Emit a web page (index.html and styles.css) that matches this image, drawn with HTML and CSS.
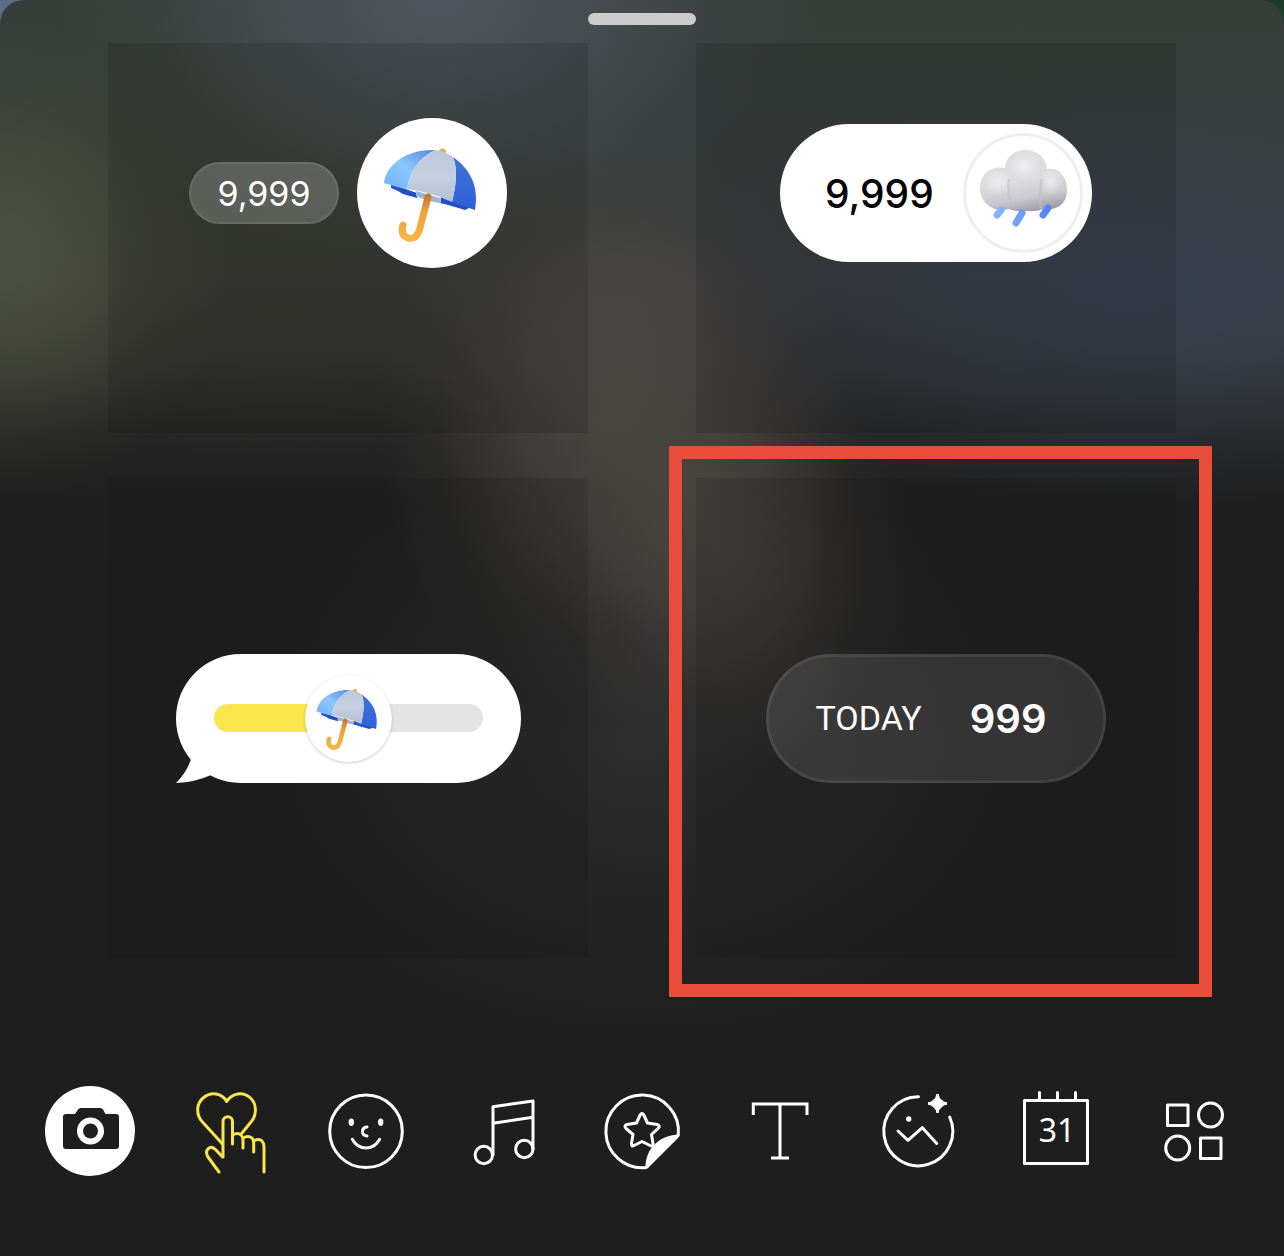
FILE: index.html
```html
<!DOCTYPE html>
<html lang="en">
<head>
<meta charset="utf-8">
<meta name="viewport" content="width=device-width, initial-scale=1">
<title>Stickers</title>
<link rel="stylesheet" href="styles.css">
</head>
<body>
<svg class="defs" aria-hidden="true">
  <defs>
    <linearGradient id="sky" x1="0" y1="1" x2="1" y2="0"><stop offset="0" stop-color="#6fb4fa"/><stop offset=".5" stop-color="#8cc6fd"/><stop offset="1" stop-color="#4f86de"/></linearGradient>
    <linearGradient id="silver" x1="0" y1="0" x2="0" y2="1"><stop offset="0" stop-color="#bcc8dc"/><stop offset=".5" stop-color="#c5cfdf"/><stop offset="1" stop-color="#b3c1d6"/></linearGradient>
    <linearGradient id="royal" x1="0" y1="0" x2="0" y2="1"><stop offset="0" stop-color="#4273d2"/><stop offset="1" stop-color="#2f5fdb"/></linearGradient>
    <linearGradient id="wood" x1="0" y1="0" x2="0" y2="1"><stop offset="0" stop-color="#c9772c"/><stop offset=".35" stop-color="#eca33a"/><stop offset="1" stop-color="#f6b545"/></linearGradient>
    <linearGradient id="puff" gradientUnits="userSpaceOnUse" x1="55" y1="17" x2="66" y2="78"><stop offset="0" stop-color="#dfdfe2"/><stop offset=".5" stop-color="#dcdcdf"/><stop offset=".78" stop-color="#cac9cf"/><stop offset="1" stop-color="#a29dab"/></linearGradient>
    <radialGradient id="glow"><stop offset="0" stop-color="#f2f2f3" stop-opacity=".8"/><stop offset="1" stop-color="#ececee" stop-opacity="0"/></radialGradient>
    <linearGradient id="rain" x1="0" y1="0" x2="1" y2="0"><stop offset="0" stop-color="#85b4ff"/><stop offset="1" stop-color="#5483f4"/></linearGradient>
    <symbol id="umbrella" viewBox="0 0 150 150">
      <path d="M82 34a3 3 0 0 1 7 0l-1 5h-6z" fill="#efaa3c"/>
      <path d="M34 66l26 9v5l-14-4-5-3-7-3z" fill="#234fc4"/>
      <path d="M59 73l27 8v5l-17-4-10-4z" fill="#9fb3d3"/>
      <path d="M84 79l30 10-6 3-10-3-14-4z" fill="#234fc4"/>
      <path d="M27 65C29 47 49 31 78 32C62 40 53 53 50 71Q38 69 27 65Z" fill="url(#sky)"/>
      <path d="M96 39C110 49 123 65 118 92L106 88L95 84C99 68 101 51 96 39Z" fill="url(#royal)"/>
      <path d="M78 32Q88 33 96 39C101 51 99 68 95 84Q73 74 50 71C53 53 62 40 78 32Z" fill="url(#silver)"/>
      <path d="M71 79L63 110Q60 122 51 120Q43 117 46 107" fill="none" stroke="url(#wood)" stroke-width="7" stroke-linecap="round" stroke-linejoin="round"/>
    </symbol>
  </defs>
</svg>

<div class="sheet">
  <button class="handle" aria-label="Resize panel"></button>

  <main class="grid">
    <div class="tile tile-cut">
      <button class="counter" aria-label="Weather counter 9,999">
        <span class="chip">9,999</span>
        <span class="disc"><svg class="art" aria-hidden="true"><use href="#umbrella"/></svg></span>
      </button>
    </div>

    <div class="tile tile-cut">
      <button class="rain-pill" aria-label="Rain counter 9,999">
        <span class="rain-value">9,999</span>
        <span class="ring">
          <svg viewBox="0 0 120 120" aria-hidden="true">
            <path d="M42 35C43 11 82 11 84 36C98 34 104 46 104 57C104 71 94 78 81 76Q72 79 62 78Q53 79 46 76C30 80 17 70 17 55C17 40 29 32 42 35Z" fill="url(#puff)"/>
            <ellipse cx="35" cy="49" rx="16" ry="15" fill="url(#glow)"/>
            <ellipse cx="61" cy="33" rx="18" ry="15" fill="url(#glow)"/>
            <ellipse cx="88" cy="49" rx="12" ry="13" fill="url(#glow)"/>
            <path d="M46 46Q44 66 52 76M79 46Q76 62 78 76" fill="none" stroke="#bfbdc6" stroke-width="3" opacity=".45"/>
            <g stroke="url(#rain)" stroke-width="7" stroke-linecap="round"><path d="M34 82l4-5M53 90l6-10M80 82l5-7"/></g>
          </svg>
        </span>
      </button>
    </div>

    <div class="tile">
      <div class="bubble">
        <svg class="tail" viewBox="0 0 36 28" aria-hidden="true"><path d="M15 0V4Q11 17 0 28Q20 27 35 20L36 0Z"/></svg>
        <label class="slider">
          <input type="range" min="0" max="100" value="50" aria-label="Reaction slider">
          <span class="thumb"><svg class="art-small" aria-hidden="true"><use href="#umbrella"/></svg></span>
        </label>
      </div>
    </div>

    <div class="tile tile-marked">
      <button class="today">
        <span class="today-label">TODAY</span>
        <span class="today-value">999</span>
      </button>
    </div>
  </main>

  <nav class="tools" aria-label="Tools">
    <button class="tool" aria-label="Camera">
      <svg viewBox="0 0 100 100">
        <circle class="solid" cx="50" cy="50" r="45"/>
        <path class="dark" d="M26 33H35L38 28.500Q39 27 41 27H60Q62 27 63 28.500L65.500 33H76Q79 33 79 36V65Q79 68 76 68H26Q23 68 23 65V36Q23 33 26 33Z"/>
        <circle class="solid" cx="50.500" cy="50" r="13.500"/><circle class="dark" cx="50.500" cy="50" r="7.500"/>
      </svg>
    </button>
    <button class="tool tool-active" aria-label="Reactions">
      <svg viewBox="0 0 100 100">
        <path d="M44.500 63L24.500 41C18 34 18 23 25 17C33 10 44 12 48.700 20.500C54 12 65 10 72.500 17C79 23 79 34 73 41L64 52"/>
        <path d="M45 76V40.500a4.750 4.750 0 0 1 9.500 0V63M54.500 54Q60 51 63 54Q65 56 65 59V67M65 57Q70 54 74 57Q75.700 59 75.700 62V71M75.700 60Q81 57 84 60Q86 62 86 66V91M44.500 76L38 69C32 63 26 69 30 76L41 91"/>
      </svg>
    </button>
    <button class="tool" aria-label="Emoji">
      <svg viewBox="0 0 100 100">
        <circle cx="50" cy="50.300" r="36.300"/>
        <ellipse class="solid" cx="35.300" cy="41.300" rx="2.700" ry="3.700"/><ellipse class="solid" cx="64.700" cy="41.300" rx="2.700" ry="3.700"/>
        <path d="M51 46Q46.500 46.500 46.500 50.500Q46.500 54.500 51 55M36.300 58.300Q41 67 50 67Q59 67 63.700 58.300"/>
      </svg>
    </button>
    <button class="tool" aria-label="Music">
      <svg viewBox="0 0 100 100">
        <circle cx="29.800" cy="74" r="8.700"/><circle cx="70.300" cy="68" r="8.700"/>
        <path d="M39 74V25.700L79 20V68M39 42.300L79 36.300"/>
      </svg>
    </button>
    <button class="tool" aria-label="Stickers">
      <svg viewBox="0 0 100 100">
        <path d="M86.300 54A36.300 36.300 0 1 0 54 86.500"/>
        <path d="M48.200 34Q50 31 51.800 34L55.500 42L65 43.500Q69 44.500 66 47.500L59.500 53.500L61 62.500Q61 66 58 64.500L50 60.500L42 64.500Q39 66 39.500 62.500L41 53.500L34 47.500Q31.500 44.500 35 43.500L44.500 42Z"/>
        <path class="solid" d="M87 53.500C69 54 53 66 53.500 88Q56 88 58 85L86 57Q88 55 87 53.500Z"/>
      </svg>
    </button>
    <button class="tool" aria-label="Text">
      <svg viewBox="0 0 100 100"><path class="butt" d="M23.300 34V23H77V34M50 23V77M41 77H59"/></svg>
    </button>
    <button class="tool" aria-label="Photo">
      <svg viewBox="0 0 100 100">
        <path d="M50.500 15.800A34.500 34.500 0 1 0 81.700 36"/>
        <circle class="solid" cx="40.700" cy="38" r="2.700"/>
        <path d="M30 50L40 59.300L54.300 46.700L68.700 62.500"/>
        <path class="solid" d="M68.300 13h2.400Q71 17 74 19Q76 21.300 79 21.300v2.400Q76 23.700 74 26Q71 28 70.700 32h-2.400Q68 28 65 26Q63 23.700 60 23.700v-2.400Q63 21.300 65 19Q68 17 68.300 13Z"/>
      </svg>
    </button>
    <button class="tool" aria-label="Date">
      <svg viewBox="0 0 100 100">
        <path d="M18.500 19.500H81.500V82.500H18.500ZM33.500 11.500V19M51.500 11.500V19M69.500 11.500V19"/>
        <text x="51" y="61" text-anchor="middle">31</text>
      </svg>
    </button>
    <button class="tool" aria-label="Widgets">
      <svg viewBox="0 0 100 100">
        <path d="M23.500 24H44V44.500H23.500ZM56.500 57H77V77.500H56.500Z"/><circle cx="66.500" cy="34" r="12"/><circle cx="33.700" cy="67" r="12"/>
      </svg>
    </button>
  </nav>
</div>
</body>
</html>
```
FILE: styles.css
```css
* { box-sizing: border-box; }

body {
  margin: 0;
  min-height: 100vh;
  display: flex;
  background: linear-gradient(90deg, #5b6b84, #1d3a2a);
  font-family: Inter, "Liberation Sans", sans-serif;
  color: #fff;
}

button {
  margin: 0;
  padding: 0;
  border: 0;
  background: none;
  color: inherit;
  font: inherit;
  cursor: pointer;
}

svg { display: block; }

.defs { position: absolute; width: 0; height: 0; }

.sheet {
  flex: 1;
  display: flex;
  flex-direction: column;
  padding-top: 13px;
  border-radius: 24px 24px 0 0;
  background:
    radial-gradient(180px 220px at 57% 550px, rgba(86, 79, 74, .55), rgba(86, 79, 74, .38) 40%, rgba(86, 79, 74, .1) 75%, transparent),
    radial-gradient(240px 300px at 48% 420px, rgba(92, 87, 81, .65), rgba(92, 87, 81, .45) 40%, rgba(92, 87, 81, .12) 75%, transparent),
    radial-gradient(230px 240px at 0 260px, rgba(84, 90, 64, .7), rgba(84, 90, 64, .45) 40%, rgba(84, 90, 64, .12) 75%, transparent),
    radial-gradient(480px 220px at 88% 290px, rgba(58, 70, 90, .7), rgba(58, 70, 90, .45) 40%, rgba(58, 70, 90, .12) 75%, transparent),
    radial-gradient(380px 260px at 34% 0, rgba(88, 96, 108, .75), rgba(88, 96, 108, .45) 40%, rgba(88, 96, 108, .12) 75%, transparent),
    radial-gradient(360px 260px at 22% 200px, rgba(58, 60, 42, .5), transparent),
    radial-gradient(440px 320px at 50% 740px, rgba(56, 56, 56, .6), rgba(56, 56, 56, .25) 50%, transparent),
    linear-gradient(#363d39 0, #373d3b 140px, #3a3a3b 280px, #323232 360px, #262626 430px, #1f1f1f 500px, #1e1e1e 640px);
}

.handle {
  align-self: center;
  width: 108px;
  height: 12px;
  border-radius: 6px;
  background: #ccc;
}

.grid {
  display: grid;
  grid-template-columns: 1fr 1fr;
  gap: 45px 108px;
  margin: 18px 108px 0;
}

.tile {
  display: flex;
  align-items: center;
  justify-content: center;
  height: 480px;
  background: rgba(16, 16, 16, .16);
}

.tile-cut { height: 390px; padding-bottom: 90px; }

.tile-marked { position: relative; }

.tile-marked::after {
  content: "";
  position: absolute;
  inset: -32px -36px -39px -27px;
  border: 13px solid #ea4d3b;
  pointer-events: none;
}

.counter { display: flex; align-items: center; gap: 18px; }

.chip {
  display: grid;
  place-items: center;
  width: 150px;
  height: 62px;
  border: 2px solid rgba(255, 255, 255, .08);
  border-radius: 31px;
  background: rgba(255, 255, 255, .2);
  font-size: 34px;
}

.disc {
  width: 150px;
  height: 150px;
  border-radius: 50%;
  background: #fff;
}

.art { width: 150px; height: 150px; }

.rain-pill {
  display: flex;
  align-items: center;
  justify-content: space-between;
  width: 312px;
  height: 138px;
  padding: 0 9px 0 45px;
  border-radius: 69px;
  background: #fff;
  color: #000;
}

.rain-value { font-size: 39px; font-weight: 500; }

.ring {
  width: 120px;
  height: 120px;
  border-radius: 50%;
  box-shadow: inset 0 0 0 3px #efefef;
}

.bubble {
  position: relative;
  width: 345px;
  height: 129px;
  padding: 21px 38px;
  border-radius: 65px;
  background: #fff;
}

.tail {
  position: absolute;
  left: 0;
  bottom: 0;
  width: 36px;
  height: 28px;
  fill: #fff;
}

.slider { position: relative; display: grid; place-items: center; height: 87px; }

.slider input {
  width: 100%;
  height: 28px;
  margin: 0;
  border-radius: 14px;
  background: linear-gradient(90deg, #f9e54c 50%, #e4e4e4 50%);
  appearance: none;
}

.slider input::-webkit-slider-thumb { width: 87px; height: 28px; appearance: none; }

.thumb {
  position: absolute;
  display: grid;
  place-content: center;
  width: 87px;
  height: 87px;
  border-radius: 50%;
  background: #fff;
  box-shadow: 0 1px 3px rgba(0, 0, 0, .2);
  pointer-events: none;
}

.art-small { width: 98px; height: 98px; }

.today {
  display: flex;
  align-items: center;
  justify-content: center;
  gap: 48px;
  width: 340px;
  height: 129px;
  padding-right: 10px;
  border: 3px solid rgba(255, 255, 255, .08);
  border-radius: 65px;
  background: rgba(255, 255, 255, .1);
}

.today-label { font-family: Roboto, sans-serif; font-size: 34px; }

.today-value { font-size: 40px; font-weight: 600; }

.tools {
  display: grid;
  grid-template-columns: repeat(9, 1fr);
  margin: 123px 21px 0;
  padding-bottom: 75px;
}

.tool { display: grid; place-items: center; }

.tool svg {
  width: 100px;
  height: 100px;
  fill: none;
  stroke: #fff;
  stroke-width: 3px;
  stroke-linecap: round;
  stroke-linejoin: round;
}

.tool-active svg { stroke: #f9e54c; }

.tool .solid { fill: #fff; stroke: none; }

.tool .dark { fill: #1e1e1e; stroke: none; }

.tool .butt { stroke-linecap: butt; stroke-linejoin: miter; }

.tool text {
  fill: #fff;
  stroke: none;
  font-family: "Noto Sans", sans-serif;
  font-size: 32px;
}
```
